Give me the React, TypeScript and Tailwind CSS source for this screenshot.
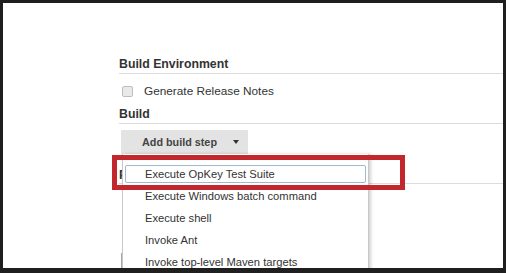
import React from "react";

const menuItems = [
  "Execute OpKey Test Suite",
  "Execute Windows batch command",
  "Execute shell",
  "Invoke Ant",
  "Invoke top-level Maven targets",
];

const font = { fontFamily: '"Liberation Sans", Arial, sans-serif' };

export default function App() {
  return (
    <div className="h-[273px] w-[506px] bg-[#1f1f1f] pb-[5px] pl-[3px] pr-[3px] pt-[3px]" style={font}>
      <div className="relative h-full w-full overflow-hidden bg-white pl-[116px] pt-[54px] text-[11.8px] leading-[14px] text-[#333]">
        <div className="border-b border-[#dcdcdc] pb-[2px] text-[12.3px] font-bold">Build Environment</div>

        <label className="mt-[10px] flex h-[14px] items-center">
          <span className="ml-[3px] h-[11px] w-[11px] rounded-[2px] border border-[#bdbdbd] bg-[#e9e9e9]" />
          <span className="ml-[11px]">Generate Release Notes</span>
        </label>

        <div className="mt-[9px] border-b border-[#dcdcdc] pb-[2px] text-[12.3px] font-bold">Build</div>

        <button
          type="button"
          className="ml-[2px] mt-[6px] flex h-[24px] w-[127px] items-center justify-between bg-[#e3e3e3] pl-[21px] pr-[9px] text-[10.8px] font-bold text-[#444]"
        >
          Add build step
          <span className="h-0 w-0 border-l-[3.5px] border-r-[3.5px] border-t-[4px] border-l-transparent border-r-transparent border-t-[#333]" />
        </button>

        <div className="mt-[14px] border-b border-[#dcdcdc] pb-[1px] text-[12.3px] font-bold">Post-build Actions</div>

        <div className="ml-[2px] mt-[69px] h-[20px] border-l-2 border-[#a8a8a8]" />

        {/* dropdown opened from the button */}
        <div className="absolute left-[119px] top-[151px] h-[140px] w-[247px] border-l border-r border-[#c8c8c8] bg-white pt-[11px] text-[11.2px] shadow-[2px_0_3px_rgba(0,0,0,0.18)]">
          {menuItems.map((item, index) => (
            <div
              key={item}
              className={`mx-[2px] mb-[4px] flex h-[18px] items-center rounded-[2px] border pl-[19px] ${index === 0 ? "border-[#9fb9cf]" : "border-transparent"}`}
            >
              {item}
            </div>
          ))}
        </div>

        <div className="absolute left-[109px] top-[152px] h-[35px] w-[293px] border-[5px] border-[#c1272d]" />
      </div>
    </div>
  );
}
